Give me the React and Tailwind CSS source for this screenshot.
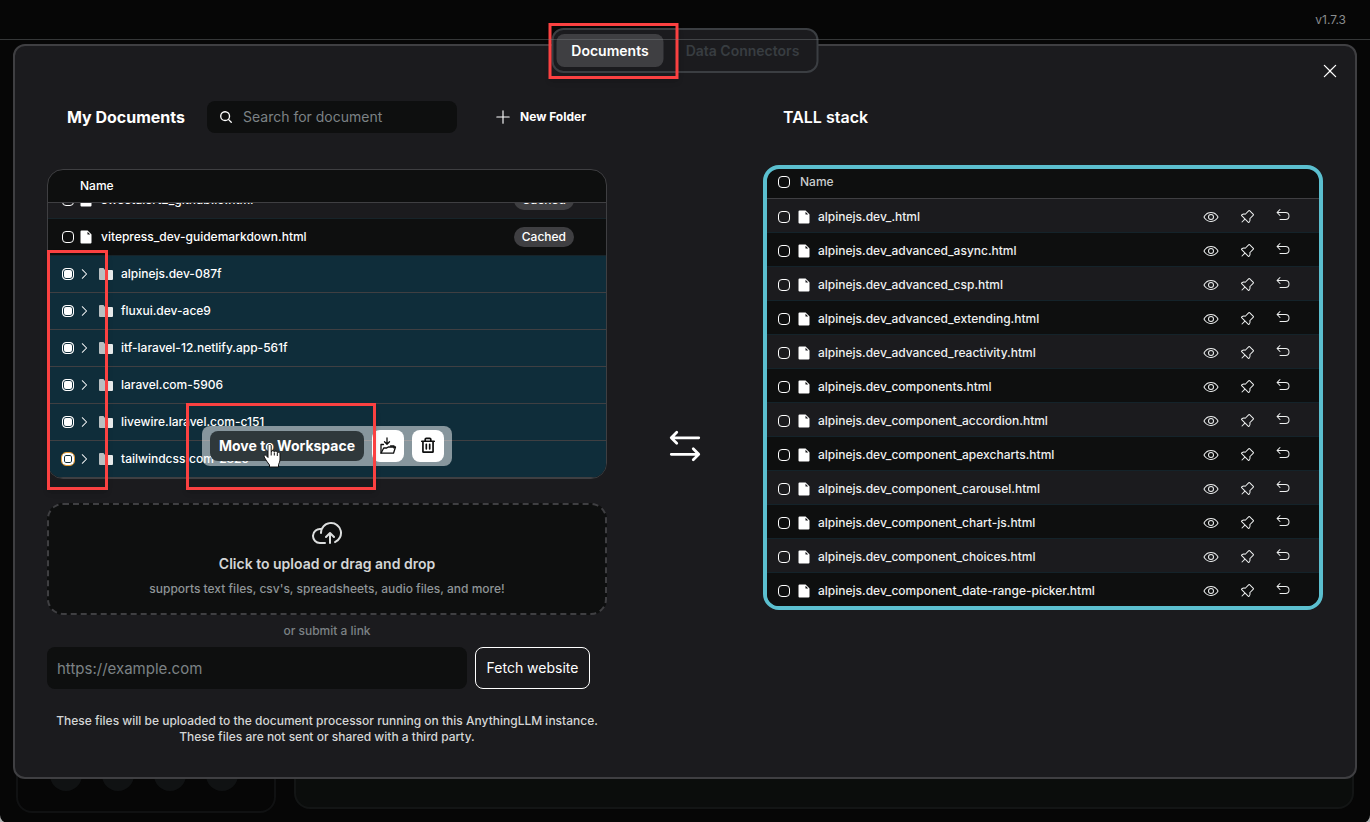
import { useState } from 'react';
import {
    PiArrowUUpLeft,
    PiArrowsLeftRight,
    PiCaretRight,
    PiCloudArrowUp,
    PiEye,
    PiFileFill,
    PiMagnifyingGlassBold,
    PiPlus,
    PiPushPin,
    PiTrashBold,
    PiX
} from 'react-icons/pi';

const FILES = [
    { name: 'sweetalert2_github.io.html', cached: true },
    { name: 'vitepress_dev-guidemarkdown.html', cached: true }
];

const FOLDERS = [
    'alpinejs.dev-087f',
    'fluxui.dev-ace9',
    'itf-laravel-12.netlify.app-561f',
    'laravel.com-5906',
    'livewire.laravel.com-c151',
    'tailwindcss.com-282c'
];

const WORKSPACE_FILES = [
    'alpinejs.dev_.html',
    'alpinejs.dev_advanced_async.html',
    'alpinejs.dev_advanced_csp.html',
    'alpinejs.dev_advanced_extending.html',
    'alpinejs.dev_advanced_reactivity.html',
    'alpinejs.dev_components.html',
    'alpinejs.dev_component_accordion.html',
    'alpinejs.dev_component_apexcharts.html',
    'alpinejs.dev_component_carousel.html',
    'alpinejs.dev_component_chart-js.html',
    'alpinejs.dev_component_choices.html',
    'alpinejs.dev_component_date-range-picker.html'
];

const CHECKBOX =
    'block w-3 h-3 shrink-0 appearance-none rounded-[4px] border border-white checked:bg-white checked:shadow-[inset_0_0_0_1px_#0f2d3a]';

const FolderIcon = () => (
    <svg width="14" height="12" viewBox="0 0 14 12" className="shrink-0" aria-hidden="true">
        <path d="M0 1a1 1 0 0 1 1-1h3.500l1.500 2v10H1a1 1 0 0 1-1-1z" fill="#b9bfc1" />
        <path d="M6 2h7a1 1 0 0 1 1 1v8a1 1 0 0 1-1 1H6z" fill="#e9ebeb" />
        <path d="M8 2v5" stroke="#8d999d" />
    </svg>
);

const MoveToFolderIcon = () => (
    <svg width="18" height="18" viewBox="0 0 18 18" fill="none" stroke="#0e0f0f" strokeWidth="1.300" strokeLinecap="round" strokeLinejoin="round" aria-hidden="true">
        <path d="M8 1v6M5.500 4.700 8 7.200l2.500-2.500" />
        <path d="M2 16V7.500h2.500M11.500 9H15v2" />
        <path d="M2 16.200 4.700 11h3l1.500-1h7.300L14.500 16.200z" />
    </svg>
);

const HandCursor = () => (
    <svg width="18" height="24" viewBox="0 0 18 24" aria-hidden="true">
        <path
            d="M5 1.500a1.700 1.700 0 0 1 3.200 0V8l.5-.8a1.500 1.500 0 0 1 2.600.8l.4-.4a1.500 1.500 0 0 1 2.600 1l.5-.1a1.500 1.500 0 0 1 2.200 1.400V15c0 3-1 4-1.500 5.500V23H6.500v-2C4.500 18.500 2.500 15.500 1.200 13c-.8-1.800 1-2.600 2.200-1.200L5 13.500z"
            fill="#fff"
            stroke="#111"
        />
        <path d="M8.200 8v3.500M11.300 8.500v3M14.300 9v3" stroke="#111" />
    </svg>
);

const Tabs = ({ tab, onChange }) => (
    <div className="absolute -top-[18px] left-1/2 -translate-x-1/2">
        <div className="flex items-center w-[267px] h-[45px] px-[3px] bg-[#1b1b1e] border-2 border-[#3b3e42] rounded-xl">
            <button
                className="w-[107px] h-[33px] shrink-0 rounded-lg bg-[#3f3f42] text-sm font-semibold text-white"
                onClick={() => onChange('documents')}
                aria-pressed={tab === 'documents'}
            >
                Documents
            </button>
            <button
                className="flex-1 h-[33px] pl-2 rounded-lg text-sm font-semibold text-[#383d41] whitespace-nowrap"
                onClick={() => onChange('connectors')}
                aria-pressed={tab === 'connectors'}
            >
                Data Connectors
            </button>
        </div>
        <div className="absolute -top-[5px] -left-[3px] w-[130px] h-14 border-3 border-[#fb4141] shadow-md pointer-events-none" />
    </div>
);

const DocumentsTable = () => (
    <div className="relative mt-9">
        <table className="block overflow-hidden rounded-2xl border border-[#3f3f42] bg-[#0e0f0f] text-xs font-medium text-white">
            <thead className="block border-b border-[#3f3f42]">
                <tr className="flex items-center h-8 pl-8">
                    <th className="font-medium">Name</th>
                </tr>
            </thead>
            <tbody className="flex flex-col justify-end h-[275px] overflow-hidden">
                {FILES.map((file, i) => (
                    <tr
                        key={file.name}
                        className={`flex items-center justify-between shrink-0 h-[37px] pl-3.5 pr-8 border-b border-[#17242a] ${i % 2 ? 'bg-[#0e0f0f]' : 'bg-[#1b1b1e]'}`}
                    >
                        <td className="flex items-center">
                            <input type="checkbox" className={CHECKBOX} aria-label={file.name} />
                            <PiFileFill className="w-4 h-4 ml-1" />
                            <span className="ml-[7px]">{file.name}</span>
                        </td>
                        <td>
                            {file.cached && <span className="block px-2 rounded-full bg-[#3f3f42] leading-5">Cached</span>}
                        </td>
                    </tr>
                ))}
                {FOLDERS.map((name, i) => (
                    <tr key={name} className="flex items-center shrink-0 h-[37px] pl-3.5 bg-[#0f2d3a] border-b border-[#3f3f42]">
                        <td className="flex items-center">
                            <input
                                type="checkbox"
                                defaultChecked
                                className={`${CHECKBOX} ${i === FOLDERS.length - 1 ? 'outline-1 outline-[#e09a35] border-2 border-[#e09a35]' : ''}`}
                                aria-label={name}
                            />
                            <PiCaretRight className="w-3.5 h-3.5 ml-[3px] mr-2" />
                            <FolderIcon />
                            <span className="ml-2">{name}</span>
                        </td>
                    </tr>
                ))}
            </tbody>
        </table>

        {/* Selection actions */}
        <div className="absolute bottom-[13px] left-1/2 -translate-x-1/2 flex items-center gap-2 h-10 px-2 rounded-lg bg-white/50">
            <button className="w-[154px] h-[30px] rounded-lg bg-[#2f383b] text-sm font-bold text-white">
                Move to Workspace
            </button>
            <button className="flex items-center justify-center w-8 h-8 rounded-lg bg-white" aria-label="Move to folder">
                <MoveToFolderIcon />
            </button>
            <button className="flex items-center justify-center w-8 h-8 rounded-lg bg-white text-[#0e0f0f]" aria-label="Delete">
                <PiTrashBold className="w-[18px] h-[18px]" />
            </button>
        </div>

        {/* Highlights */}
        <div className="absolute top-[81px] left-0 w-[61px] h-60 border-3 border-[#fb4141] shadow-md pointer-events-none" />
        <div className="absolute top-[234px] left-[139px] w-[190px] h-[87px] border-3 border-[#fb4141] shadow-md pointer-events-none" />
        <div className="absolute top-[275px] left-[216px] pointer-events-none">
            <HandCursor />
        </div>
    </div>
);

const WorkspaceTable = () => (
    <table className="block mt-8 overflow-hidden rounded-2xl border-4 border-[#5bbfcf] bg-[#0e0f0f] text-xs font-medium text-[#eef0f0]">
        <thead className="block border-b border-[#3f3f42]">
            <tr className="flex items-center h-[29px] pl-[11px] pb-1">
                <th className="flex items-center">
                    <input type="checkbox" className={CHECKBOX} aria-label="Select all" />
                    <span className="ml-2.5 font-medium text-[#c9cccd]">Name</span>
                </th>
            </tr>
        </thead>
        <tbody className="block">
            {WORKSPACE_FILES.map((name, i) => (
                <tr
                    key={name}
                    className={`flex items-center justify-between h-[34px] pt-0.5 pl-[11px] pr-7 border-b border-[#14232a] last:h-[33px] last:border-b-0 ${i % 2 ? 'bg-[#0e0f0f]' : 'bg-[#1b1b1e]'}`}
                >
                    <td className="flex items-center">
                        <input type="checkbox" className={CHECKBOX} aria-label={name} />
                        <PiFileFill className="w-4 h-4 mx-1.5 text-white" />
                        <span>{name}</span>
                    </td>
                    <td className="flex items-center gap-5">
                        <button aria-label="View"><PiEye className="w-4 h-4" /></button>
                        <button aria-label="Pin"><PiPushPin className="w-4 h-4" /></button>
                        <button className="pb-1" aria-label="Remove"><PiArrowUUpLeft className="w-4 h-4" /></button>
                    </td>
                </tr>
            ))}
        </tbody>
    </table>
);

const Backdrop = () => (
    <div className="absolute inset-0 flex flex-col">
        <div className="flex items-center justify-end h-10 pr-6 text-xs text-[#8b8d8e]">v1.7.3</div>
        <div className="flex flex-1 items-end gap-[18px] px-4">
            <div className="flex items-end gap-5 w-[260px] h-20 pl-8 pb-5 mb-2.5 border-2 border-[#101112] rounded-2xl">
                {[0, 1, 2, 3].map((n) => (
                    <div key={n} className="w-8 h-8 rounded-full bg-[#101213]" />
                ))}
            </div>
            <div className="flex-1 h-20 mb-3.5 rounded-2xl border-2 border-[#131515] bg-[#0b0d0c]" />
        </div>
    </div>
);

const App = () => {
    const [tab, setTab] = useState('documents');
    const [search, setSearch] = useState('');
    const [link, setLink] = useState('');

    return (
        <div className="bg-[#b0b0b0] font-['Inter',sans-serif]">
            <div className="relative min-h-screen px-[13px] pt-11 pb-11 bg-[#060606] rounded-b-lg">
                <Backdrop />

                <main className="relative pt-[55px] px-8 pb-8 rounded-xl border-2 border-[#3f3f42] bg-[#1b1b1e]">
                    <Tabs tab={tab} onChange={setTab} />
                    <button className="absolute top-[15px] right-[15px] text-white" aria-label="Close">
                        <PiX className="w-5 h-5" />
                    </button>

                    <div className="flex justify-between">
                        {/* My documents */}
                        <section className="w-[560px]">
                            <div className="flex items-center h-8 pl-5">
                                <h2 className="w-[140px] text-base font-bold text-white">My Documents</h2>
                                <label className="flex items-center gap-2.5 w-[250px] h-8 px-3 rounded-lg bg-[#0e0f0f] text-white">
                                    <PiMagnifyingGlassBold className="w-3.5 h-3.5 shrink-0" />
                                    <input
                                        type="search"
                                        className="w-full bg-transparent text-sm placeholder:text-[#7c8285] focus:outline-none"
                                        placeholder="Search for document"
                                        aria-label="Search for document"
                                        value={search}
                                        onChange={(e) => setSearch(e.target.value)}
                                    />
                                </label>
                                <button className="flex items-center gap-2 ml-[37px] text-xs font-bold text-white">
                                    <PiPlus className="w-[18px] h-[18px]" />
                                    New Folder
                                </button>
                            </div>

                            <DocumentsTable />

                            <button className="flex flex-col items-center w-full h-28 mt-6 pt-3 rounded-2xl border-2 border-dashed border-[#3f3f42] bg-[#0e0f0f]">
                                <PiCloudArrowUp className="w-8 h-8 text-[#dcdede]" />
                                <span className="mt-[5px] text-sm font-semibold text-[#d4d6d6]">Click to upload or drag and drop</span>
                                <span className="mt-[7px] text-xs font-medium text-[#8f9597]">
                                    supports text files, csv's, spreadsheets, audio files, and more!
                                </span>
                            </button>
                            <p className="my-2 text-center text-xs font-medium text-[#7c8285]">or submit a link</p>
                            <form className="flex gap-2" onSubmit={(e) => e.preventDefault()}>
                                <input
                                    type="url"
                                    className="w-[420px] h-[42px] px-2.5 rounded-lg bg-[#0e0f0f] text-[15px] text-white placeholder:text-[#7c8285] focus:outline-none"
                                    placeholder="https://example.com"
                                    aria-label="Website link"
                                    value={link}
                                    onChange={(e) => setLink(e.target.value)}
                                />
                                <button className="w-[115px] h-[42px] rounded-lg border border-white text-sm text-white whitespace-nowrap">
                                    Fetch website
                                </button>
                            </form>
                            <p className="mt-6 text-center text-xs font-medium text-[#d4d6d6]">
                                These files will be uploaded to the document processor running on this AnythingLLM instance.
                                <br />
                                These files are not sent or shared with a third party.
                            </p>
                        </section>

                        <PiArrowsLeftRight className="w-11 h-11 mt-[323px] text-white" />

                        {/* Workspace */}
                        <section className="w-[560px]">
                            <div className="flex items-center h-8 pl-5">
                                <h2 className="text-base font-semibold text-white">TALL stack</h2>
                            </div>
                            <WorkspaceTable />
                        </section>
                    </div>
                </main>

                <div className="absolute top-[39px] inset-x-0 h-px bg-[#7c8285]/40 pointer-events-none" />
            </div>
        </div>
    );
};

export default App;
